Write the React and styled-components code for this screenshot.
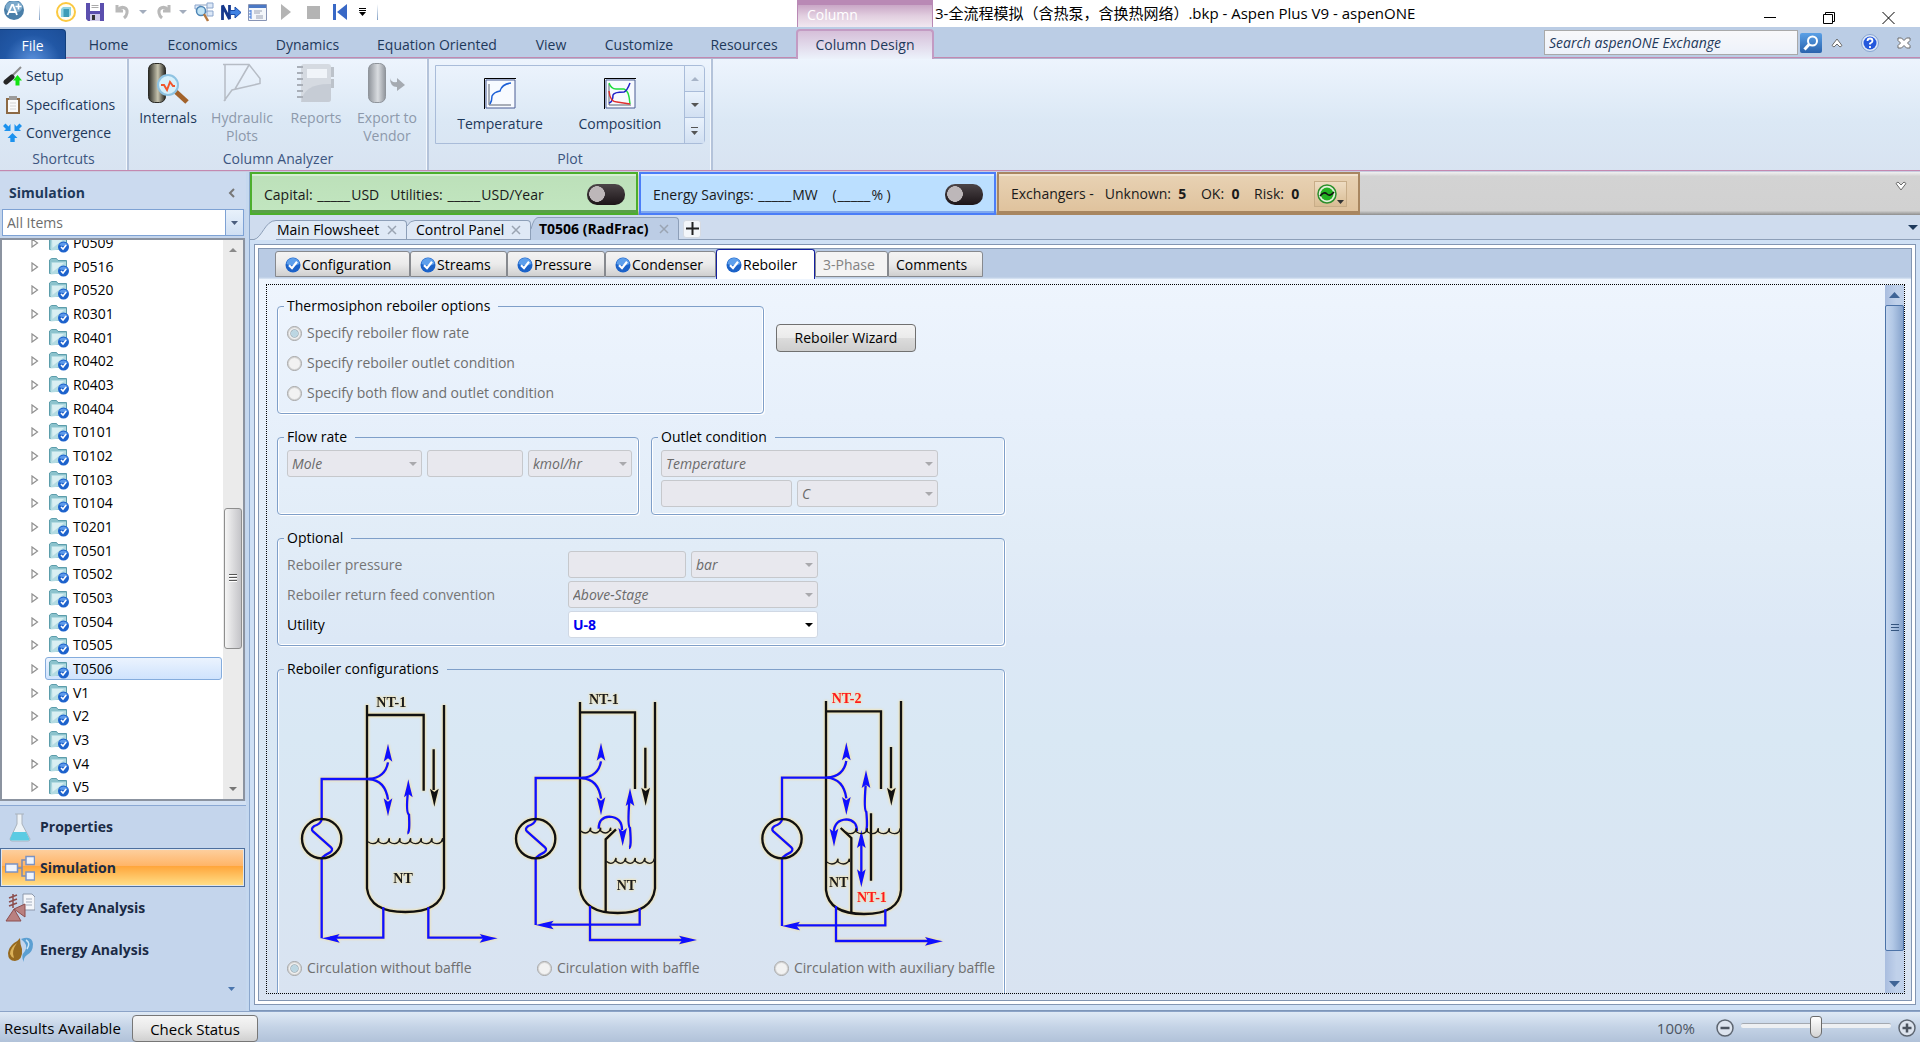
import React from "react";
import styled, { createGlobalStyle } from "styled-components";

let GlobalStyle = createGlobalStyle`
  *, *::before, *::after {
    box-sizing: border-box;
  }

  body {
    margin: 0;
    overflow: hidden;
    background: #fff;
    font-family: "Open Sans", "Noto Sans", "Noto Sans CJK SC", sans-serif;
    font-size: 14px;
    line-height: 18px;
    color: #000;
  }

  button, input, select {
    font: inherit;
    color: inherit;
  }

  button {
    padding: 0;
    border: 0;
    background: none;
    white-space: nowrap;
  }

  svg {
    display: block;
    flex: none;
  }
`;

let Window = styled.div`
  display: flex;
  flex-direction: column;
  height: 100vh;
  background: #c5d8ef;
`;

/* Title bar */

let TitleBar = styled.header`
  display: flex;
  flex: none;
  height: 27px;
  background: #fff;
`;

let QuickAccess = styled.div`
  display: flex;
  align-items: center;
  width: 797px;
  height: 24px;
`;

let QuickButton = styled.button`
  display: flex;
  justify-content: center;
  align-items: center;
  width: ${p => p.$w}px;
  height: 24px;
`;

let QuickLine = styled.span`
  width: 1px;
  height: 16px;
  background: linear-gradient(#fff, #7f9ec4);
`;

let ContextTitle = styled.div`
  width: 136px;
  padding: 1px 9px;
  border: 1px solid #b989b5;
  border-top-width: 5px;
  border-bottom: 0;
  background: linear-gradient(#c9a6c6, #e2cfe0 50%, #f1e8f0);
  color: #fff;
`;

let WindowTitle = styled.h1`
  flex: 1;
  margin: 0;
  padding: 4px 2px;
  font-size: 15px;
  font-weight: 400;
`;

let WindowButtons = styled.div`
  display: flex;
  padding: 8px 2px 0 0;
`;

let WindowButton = styled.button`
  display: flex;
  justify-content: center;
  width: 58px;
  margin-right: 1px;
`;

/* Ribbon */

let RibbonTabs = styled.nav`
  display: flex;
  flex: none;
  height: 32px;
  padding-top: 2px;
  background: #bbcde5;
  box-shadow: inset 0 -1px 0 #b0b4cf, inset 0 -2px 0 #c389b0;
`;

let RibbonTab = styled.button`
  width: ${p => p.$w}px;
  height: 30px;
  padding-top: 2px;
  color: #1e395b;
`;

let FileTab = styled(RibbonTab)`
  border: 1px solid #123f7c;
  border-width: 1px 1px 0 0;
  border-radius: 0 4px 0 0;
  background: radial-gradient(ellipse at 50% 110%, #5c92dd, #2157a5 60%, #1c4e98);
  color: #fff;
`;

let ActiveRibbonTab = styled(RibbonTab)`
  padding-top: 0;
  border: 2px solid #c39bc3;
  border-bottom: 0;
  border-radius: 4px 4px 0 0;
  background: linear-gradient(#d6bfd9, #ecf2fb);
`;

let RibbonTools = styled.div`
  display: flex;
  align-items: center;
  height: 27px;
  margin-left: auto;
`;

let SearchBox = styled.input`
  width: 254px;
  height: 25px;
  padding: 0 4px;
  border: 1px solid #a9a9a9;
  background: linear-gradient(#f8f8fa, #edf2fa);
  font-style: italic;
  color: #1e395b;

  &::placeholder {
    color: #1e395b;
    opacity: 1;
  }
`;

let SearchButton = styled.button`
  display: flex;
  justify-content: center;
  align-items: center;
  width: 22px;
  height: 20px;
  margin-left: 2px;
  border-radius: 2px;
  background: linear-gradient(#5aa0e6, #2a63ad);
`;

let ToolButton = styled.button`
  display: flex;
  justify-content: center;
  width: ${p => p.$w}px;
`;

let Ribbon = styled.section`
  display: flex;
  flex: none;
  height: 113px;
  background: linear-gradient(#edf4fd, #dbe8f5 55%, #d8e3f1);
  box-shadow: inset 0 -1px 0 #c9cbe0, inset 0 -2px 0 #c389b0;
`;

let RibbonGroup = styled.div`
  display: flex;
  flex-direction: column;
  width: ${p => p.$w}px;
  height: 111px;
  border-right: 2px solid #b4c3da;
  box-shadow: inset -1px 0 0 #f4f8fd;
  color: #1e395b;
`;

let GroupBody = styled.div`
  display: flex;
  flex: 1;
  padding: ${p => p.$pad};
`;

let GroupName = styled.div`
  height: 20px;
  text-align: center;
  color: #3c5580;
`;

let ShortcutList = styled.div`
  display: flex;
  flex-direction: column;
  justify-content: space-between;
  height: 83px;
`;

let Shortcut = styled.button`
  display: flex;
  align-items: center;
  gap: 4px;
  height: 26px;
`;

let BigButton = styled.button`
  display: flex;
  flex-direction: column;
  align-items: center;
  gap: 5px;
  width: ${p => p.$w || 74}px;
  white-space: normal;
  color: ${p => (p.disabled ? "#8d99ab" : "#1e395b")};
`;

let Gallery = styled.div`
  display: flex;
  width: 270px;
  height: 79px;
  padding-left: 4px;
  border: 1px solid #a9bcd9;
  border-radius: 0 4px 4px 0;
`;

let GalleryItem = styled.button`
  display: flex;
  flex-direction: column;
  align-items: center;
  gap: 5px;
  width: 120px;
  padding-top: 12px;
  color: #1e395b;
`;

let GalleryScroll = styled.div`
  display: flex;
  flex-direction: column;
  width: 20px;
  margin-left: auto;
  border-left: 1px solid #a9bcd9;
`;

let GalleryArrow = styled.button`
  display: flex;
  flex: 1;
  justify-content: center;
  align-items: center;
  background: linear-gradient(#e9f2fc, #d2e0f2);
  opacity: ${p => (p.disabled ? 0.4 : 1)};

  & + & {
    border-top: 1px solid #a9bcd9;
  }
`;

/* Left side */

let Body = styled.div`
  display: flex;
  flex: 1;
  min-height: 0;
`;

let Side = styled.aside`
  display: flex;
  flex-direction: column;
  width: 246px;
  background: #c4d5ec;
`;

let SideHeader = styled.div`
  display: flex;
  flex: none;
  justify-content: space-between;
  align-items: center;
  height: 37px;
  padding: 4px 11px 0 9px;
  background: #cbdaef;
`;

let SideTitle = styled.h2`
  margin: 0;
  font-size: 14px;
  font-weight: 700;
  color: #1e395b;
`;

let Filter = styled.label`
  display: grid;
  flex: none;
  grid-template-columns: 1fr 18px;
  height: 27px;
  margin: 0 2px 2px;
  border: 1px solid #7ea2d4;
  background: #fff;
`;

let FilterSelect = styled.select`
  grid-area: 1 / 1 / 2 / 3;
  padding: 0 4px;
  border: 0;
  appearance: none;
  background: transparent;
  color: #6d6d6d;
`;

let FilterArrow = styled.span`
  display: flex;
  grid-area: 1 / 2;
  justify-content: center;
  align-items: center;
  border-left: 1px solid #7ea2d4;
  background: linear-gradient(#e8f1fb, #cfdff3);
  pointer-events: none;
`;

let Tree = styled.div`
  display: flex;
  flex: 1;
  min-height: 0;
  margin-right: 1px;
  border: 2px solid #8b93a0;
  background: #fff;
  overflow: hidden;
`;

let TreeList = styled.ul`
  display: flex;
  flex: 1;
  flex-direction: column;
  margin: -9px 0 0;
  padding: 0 1px 0 28px;
  list-style: none;
`;

let TreeItem = styled.li`
  display: flex;
  flex: 1;
  align-items: center;
  gap: 5px;
  min-height: 0;
`;

let TreeButton = styled.button`
  display: flex;
  flex: 1;
  align-items: center;
  gap: 4px;
  height: 23px;
  padding: 0 3px;
  border: 1px solid ${p => (p.$selected ? "#84acdd" : "transparent")};
  border-radius: 3px;
  background: ${p => (p.$selected ? "linear-gradient(#ebf3fe, #cfe3fd)" : "none")};
`;

let TreeScroll = styled.div`
  display: flex;
  flex-direction: column;
  align-items: center;
  width: 20px;
  padding: 8px 0;
  background: #ebebeb;
`;

let TreeThumb = styled.div`
  display: flex;
  justify-content: center;
  align-items: center;
  width: 18px;
  height: 26%;
  margin: auto 0 ${p => p.$bottom}px;
  border: 1px solid #8e8e8e;
  border-radius: 3px;
  background: linear-gradient(90deg, #f5f5f5, #dcdcde 50%, #c4c4c8);
`;

let Splitter = styled.div`
  flex: none;
  height: 5px;
  border-bottom: 1px solid #8aa8d3;
  background: #d3e1f3;
`;

let Areas = styled.nav`
  display: flex;
  flex: none;
  flex-direction: column;
  height: 205px;
`;

let Area = styled.button`
  display: flex;
  align-items: center;
  gap: 5px;
  height: ${p => (p.$active ? 39 : 42)}px;
  padding-left: 4px;
  margin-right: 1px;
  border: 1px solid ${p => (p.$active ? "#4d6f9e" : "transparent")};
  background: ${p =>
    p.$active ? "linear-gradient(#fdd0a0, #ffb568 45%, #ffa53a 46%, #ffe08a)" : "none"};
  box-shadow: ${p => (p.$active ? "inset 0 0 0 1px #dfe6ee" : "none")};
  font-weight: 700;
  color: #1b2b45;
`;

let AreasMore = styled.div`
  display: flex;
  justify-content: flex-end;
  padding: 16px 11px 0 0;
`;

/* Activated analysis strip */

let Main = styled.main`
  display: flex;
  flex: 1;
  flex-direction: column;
  min-width: 0;
  margin-left: 4px;
  box-shadow: -1px 0 0 #8ba7cd;
`;

let AnalysisStrip = styled.section`
  display: flex;
  flex: none;
  gap: 1px;
  height: 43px;
  background: linear-gradient(#f0f0f0, #d3d3d3 10%, #d1d1d1 90%, #8e8e8e);
`;

let colors = {
  green: "border-color: #4cae2c; background: linear-gradient(#bce0b9, #c2e6c0); box-shadow: inset 0 2px 0 #d7efd4, inset 0 -3px 0 #58a047;",
  blue: "border-color: #4a7df8; background: #bbdfff; box-shadow: inset 0 2px 0 #dceeff, inset 0 -2px 0 #7fa8ee;",
  brown: "border-color: #a88660; background: linear-gradient(#e8d2b4, #dfc29c); box-shadow: inset 0 2px 0 #f1e2cc, inset 0 -2px 0 #a88660;",
};

let Analysis = styled.div`
  display: flex;
  align-items: center;
  gap: 11px;
  width: ${p => p.$w}px;
  height: 43px;
  padding: 1px 11px 0 12px;
  border: 2px solid;
  white-space: pre;
  color: #1a1a1a;
  ${p => colors[p.$tone]}
`;

let Blank = styled.span`
  margin: 0 1px;
  font-size: 15px;
`;

let Toggle = styled.input`
  appearance: none;
  width: 38px;
  height: 21px;
  margin: 0 0 0 auto;
  border-radius: 10px;
  background: radial-gradient(ellipse 8px 8px at 10px 10px, #bdb7b9 95%, transparent),
    linear-gradient(#4c4548, #1c1518);
`;

let ExchangerButton = styled.button`
  display: flex;
  align-items: flex-end;
  width: 33px;
  height: 26px;
  margin-left: auto;
  padding: 2px;
  border: 1px solid #c8ad88;
  background: linear-gradient(#eedcc2, #d9bc94);
`;

let StripToggle = styled.button`
  align-self: flex-start;
  margin: 9px 13px 0 auto;
`;

/* Document tabs */

let DocTabs = styled.nav`
  display: flex;
  flex: none;
  align-items: flex-end;
  height: 25px;
  background: #cfdcee;
  box-shadow: inset 0 -1px 0 #8d9fb8;
`;

let DocTab = styled.div`
  display: flex;
  height: ${p => (p.$active ? 23 : 20)}px;
  margin-left: ${p => (p.$first ? 4 : 0)}px;
`;

let DocTabBody = styled.div`
  display: flex;
  justify-content: space-between;
  align-items: center;
  width: ${p => p.$w}px;
  padding: 0 9px 0 1px;
  border: 1px solid #8d9fb8;
  border-width: 1px 1px ${p => (p.$active ? 0 : 1)}px 0;
  border-radius: 0 4px 0 0;
  background: ${p => (p.$active ? "#bccde5" : "#dfe9f6")};
  font-weight: ${p => (p.$active ? 700 : 400)};
`;

let AddTab = styled.button`
  display: flex;
  justify-content: center;
  align-items: center;
  align-self: center;
  width: 18px;
  height: 18px;
  margin: 2px 0 0 4px;
  border: 1px solid #d5dae2;
  border-radius: 3px;
  background: #f3f6fa;
`;

let DocMenu = styled.button`
  align-self: center;
  margin: 0 2px 0 auto;
`;

/* Form */

let DocFrame = styled.div`
  display: flex;
  flex: 1;
  min-height: 0;
  padding: 4px 4px 5px;
  background: #cfe0f5;
  border-bottom: 1px solid #7d95b8;
`;

let DocInner = styled.div`
  display: flex;
  flex: 1;
  min-width: 0;
  padding: 3px;
  border: 1px solid #8396b3;
  background: #fff;
`;

let FormSheet = styled.div`
  display: flex;
  flex: 1;
  flex-direction: column;
  min-width: 0;
  border: 1px solid #8396b3;
  background: linear-gradient(#f0f6fe, #e7f0fb 22%, #e1ecf7 40%, #dce8f6 52%, #d9e8f4 65%, #d9e3f1);
`;

let SheetTabs = styled.div`
  display: flex;
  flex: none;
  align-items: flex-end;
  height: 30px;
  padding-left: 16px;
  background: linear-gradient(#b9cbe4 28px, #dbe7f5);
`;

let SheetTab = styled.button`
  display: flex;
  align-items: center;
  gap: 1px;
  width: ${p => p.$w}px;
  height: ${p => (p["aria-selected"] ? 30 : 26)}px;
  margin-bottom: ${p => (p["aria-selected"] ? 0 : 2)}px;
  padding: 1px 0 0 ${p => (p.$done ? 9 : 7)}px;
  border: 1px solid ${p => (p["aria-selected"] ? "#1420a0" : "#86898e")};
  border-bottom-width: ${p => (p["aria-selected"] ? 0 : 1)}px;
  border-radius: 3px 3px 0 0;
  background: ${p =>
    p["aria-selected"] ? "#fff" : p.disabled ? "#f4f4f4" : "linear-gradient(#f3f3f3, #ebebeb 50%, #cfcfcf)"};
  color: ${p => (p.disabled ? "#838383" : "#000")};
`;

let ScrollArea = styled.div`
  display: flex;
  flex: 1;
  min-height: 0;
  margin: 5px 6px 6px 7px;
  border: 1px dotted #000;
  overflow: hidden;
`;

let Form = styled.form`
  display: flex;
  flex: 1;
  flex-direction: column;
  align-items: flex-start;
  min-width: 0;
  padding: 12px 0 0 10px;
  gap: 14px;
  overflow: hidden;
`;

let FormRow = styled.div`
  display: flex;
  flex: none;
  gap: 12px;
`;

let Group = styled.fieldset`
  flex: none;
  width: ${p => p.$w}px;
  min-width: 0;
  height: ${p => (p.$h ? p.$h + "px" : "auto")};
  margin: 0;
  padding: 4px 0 0 9px;
  border: 1px solid #7f9fc9;
  border-radius: 4px;
  box-shadow: 1px 1px 0 #fff, inset 1px 0 0 #fff, inset -1px -1px 0 #fff;
`;

let Legend = styled.legend`
  height: 18px;
  margin-left: -3px;
  padding: 0 8px 0 3px;
`;

let Radios = styled.div`
  display: flex;
  flex-direction: column;
  gap: 12px;
  padding-top: 5px;
`;

let RadioLabel = styled.label`
  display: flex;
  align-items: center;
  gap: 5px;
  height: 18px;
  white-space: nowrap;
  color: #6f6f6f;
`;

let RadioInput = styled.input`
  appearance: none;
  flex: none;
  width: 15px;
  height: 15px;
  margin: 0;
  border: 1px solid #a4a4a4;
  border-radius: 50%;
  background: #f2f2f2;
  box-shadow: inset 0 0 0 1px #d4d4d4;

  &:checked {
    background: radial-gradient(circle closest-side, #bcd6e2 50%, #a3b0b8 58%, #f2f2f2 72%);
  }
`;

let WizardButton = styled.button`
  width: 140px;
  height: 28px;
  margin-top: 27px;
  border: 1px solid #707070;
  border-radius: 4px;
  background: linear-gradient(#f3f3f3, #ebebeb 49%, #dcdcdc 50%, #cecece);
`;

let Fields = styled.div`
  display: flex;
  gap: 5px;
  margin-bottom: 3px;
`;

let FieldRow = styled.div`
  display: grid;
  grid-template-columns: 281px auto;
  align-items: center;
  width: 531px;
  margin-bottom: 3px;
  color: ${p => (p.$enabled ? "#000" : "#757575")};
`;

let FieldGroup = styled.div`
  display: flex;
  gap: 5px;
`;

let TextField = styled.input`
  width: ${p => p.$w}px;
  height: 27px;
  border: 1px solid #c6c8cc;
  border-radius: 3px;
  background: #e8e8ee;
`;

let ComboWrap = styled.div`
  display: grid;
  grid-template-columns: 1fr 19px;
  align-items: center;
  width: ${p => p.$w}px;
`;

let ComboSelect = styled.select`
  grid-area: 1 / 1 / 2 / 3;
  height: 27px;
  padding: 1px 4px 0;
  border: 1px solid ${p => (p.disabled ? "#c6c8cc" : "#d0d8e4")};
  border-radius: 3px;
  appearance: none;
  background: ${p => (p.disabled ? "#e8e8ee" : "#fff")};
  font-style: ${p => (p.disabled ? "italic" : "normal")};
  font-weight: ${p => (p.disabled ? 400 : 700)};
  color: ${p => (p.disabled ? "#6b6b6b" : "#0000f0")};
  opacity: 1;
`;

let ComboArrow = styled.span`
  grid-area: 1 / 2;
  justify-self: center;
  pointer-events: none;
`;

let Diagrams = styled.div`
  display: flex;
  padding: 8px 0 0 12px;
`;

let ConfigChoices = styled.div`
  display: grid;
  grid-template-columns: 250px 237px auto;
  padding-top: 11px;
`;

let ConfigNote = styled.div`
  padding: 13px 0 0 20px;
  color: #6f6f6f;
`;

let FormScroll = styled.div`
  display: flex;
  flex-direction: column;
  align-items: center;
  width: 19px;
  padding-bottom: 6px;
  background: linear-gradient(90deg, #a9bddf, #c0d1ea 60%);
`;

let FormScrollUp = styled.div`
  display: flex;
  justify-content: center;
  align-items: center;
  height: 20px;
`;

let FormThumb = styled.div`
  display: flex;
  flex: 1;
  justify-content: center;
  align-items: center;
  width: 19px;
  margin-bottom: 30px;
  border: 1px solid #4c73a8;
  border-radius: 2px;
  background: linear-gradient(90deg, #c5d6ee, #b2c8e6 40%, #86a3cc);
`;

/* Status bar */

let StatusBar = styled.footer`
  display: flex;
  flex: none;
  align-items: center;
  height: 31px;
  padding: 2px 0 0 4px;
  border-top: 1px solid #8ba3c7;
  background: linear-gradient(#dfe9f5, #c4d3e6 50%, #b1c2d9);
  font-size: 15px;
`;

let StatusButton = styled.button`
  align-self: flex-end;
  width: 126px;
  height: 27px;
  margin-left: 6px;
  border: 1px solid #777;
  border-radius: 4px;
  background: linear-gradient(#f6f6f6, #e8e8e8 50%, #d0d0d0);
`;

let StatusText = styled.span`
  width: 122px;
  white-space: nowrap;
`;

let Zoom = styled.div`
  display: flex;
  align-items: center;
  gap: 7px;
  margin-left: auto;
  padding-right: 4px;
  color: #4d5663;
`;

let ZoomLevel = styled.output`
  margin-right: 14px;
`;

let Slider = styled.input`
  appearance: none;
  width: 150px;
  height: 22px;
  margin: 0 0 6px;
  background: transparent;

  &::-webkit-slider-runnable-track {
    height: 5px;
    border-top: 1px solid #a4a9b1;
    border-radius: 2px;
    background: #eef0f3;
  }

  &::-webkit-slider-thumb {
    appearance: none;
    width: 12px;
    height: 22px;
    margin-top: -8px;
    border: 1px solid #6b6b6b;
    border-radius: 3px 3px 6px 6px;
    background: linear-gradient(#fff, #d4d4d4);
  }
`;

/* Icons */

function Caret({ w = 8, color = "#4a5d7d", up }) {
  let h = Math.ceil(w / 2);
  return (
    <svg width={w} height={h} viewBox="0 0 8 4" preserveAspectRatio="none">
      <path d={up ? "M0 4L4 0l4 4z" : "M0 0h8L4 4z"} fill={color} />
    </svg>
  );
}

function CheckBall() {
  return (
    <svg width="16" height="16" viewBox="0 0 16 16">
      <circle cx="8" cy="8" r="7.5" fill="#1b62c8" />
      <path d="M1.5 7A6.5 6 0 0 1 14.5 7Q8 10 1.5 7z" fill="#5d9fec" />
      <path d="M4 8.2l3 3 5-6.4" fill="none" stroke="#fff" strokeWidth="2.2" />
    </svg>
  );
}

function FolderIcon() {
  return (
    <svg width="20" height="20" viewBox="0 0 20 20">
      <path d="M.5 3L2.5 1.5h5l1.5 2h8.500v13H.5z" fill="#8cc3cd" stroke="#5c9dab" />
      <path d="M2.500 5H17v11L1.500 17.5z" fill="#b3dbe2" />
      <path d="M3 6h12L3.500 15z" fill="#d9eff2" />
      <circle cx="14.5" cy="14" r="5.5" fill="#1d62cc" />
      <path d="M10 12a5 4.500 0 0 1 9 0q-4.500 2-9 0z" fill="#5c99ea" />
      <path d="M12 14l2 2 3.200-4" fill="none" stroke="#fff" strokeWidth="1.600" />
    </svg>
  );
}

function Expander() {
  return (
    <svg width="10" height="10" viewBox="0 0 10 10">
      <path d="M2 1l5.500 4L2 9z" fill="#fff" stroke="#8f8f8f" strokeWidth="1.200" />
    </svg>
  );
}

function Cross({ color = "#9aa4b2" }) {
  return (
    <svg width="10" height="10" viewBox="0 0 10 10">
      <path d="M1 1l8 8M9 1L1 9" stroke={color} strokeWidth="1.500" />
    </svg>
  );
}

function Grip({ vertical, color }) {
  return (
    <svg width="10" height="10" viewBox="0 0 10 10">
      <path d="M1 1.500h8M1 4.500h8M1 7.500h8" stroke={color || "#555"} strokeWidth="1" />
      {vertical && <path d="M1 2.500h8M1 5.500h8M1 8.500h8" stroke="#fff" strokeWidth="1" />}
    </svg>
  );
}

function LogoIcon() {
  return (
    <svg width="22" height="22" viewBox="0 0 22 22">
      <circle cx="11" cy="9" r="10" fill="#4a7fa9" />
      <ellipse cx="11" cy="6" rx="8.500" ry="6" fill="#7ba9cb" />
      <path d="M4.500 14L9 4h1l4 10M6 11h6.500" fill="none" stroke="#fff" strokeWidth="1.800" />
      <path d="M12.500 5.500h6M15.500 2.500v6" stroke="#fff" strokeWidth="1.600" />
    </svg>
  );
}

function NewIcon() {
  return (
    <svg width="20" height="20" viewBox="0 0 20 20">
      <circle cx="10" cy="10" r="9" fill="#fffdf2" stroke="#fbc941" strokeWidth="2" />
      <path d="M5 7l2-2h8v8l-2 2H5z" fill="#8ed2e2" />
      <path d="M7.500 7H13v8H7.500z" fill="#3d9cb8" />
    </svg>
  );
}

function SaveIcon() {
  return (
    <svg width="18" height="18" viewBox="0 0 18 18">
      <path d="M0 0h18v18H2l-2-2z" fill="#5b4fae" />
      <path d="M4 0h10v8H4z" fill="#fff" />
      <path d="M5.500 2.500h7M5.500 4.500h7" stroke="#aaa" />
      <path d="M4 11h10v7H4z" fill="#cfcbe9" />
      <path d="M6 12h3v5H6z" fill="#333" />
    </svg>
  );
}

function UndoIcon({ flip }) {
  return (
    <svg width="15" height="16" viewBox="0 0 15 16">
      <path
        d={flip ? "M13 1v6H7M12 6C8 1 2 4 3 9q.5 3 3 5" : "M2 1v6h6M3 6c4-5 10-2 9 3q-.5 3-3 5"}
        fill="none"
        stroke="#b9b9b9"
        strokeWidth="3"
      />
    </svg>
  );
}

function FindIcon() {
  return (
    <svg width="20" height="20" viewBox="0 0 20 20">
      <path d="M6 3h8M13 5v6h3" fill="none" stroke="#8da2bf" />
      <path d="M1 3h5v4H1zM13 1h6v5h-6zM13 9h6v5h-6z" fill="#dce8f7" stroke="#8ba5cc" />
      <circle cx="7" cy="9" r="4.500" fill="#c2e4f5" stroke="#4f86b6" strokeWidth="1.500" />
      <path d="M10 12l4 7" stroke="#b57840" strokeWidth="2.500" />
    </svg>
  );
}

function NextIcon() {
  return (
    <svg width="20" height="17" viewBox="0 0 20 17">
      <path d="M1.500 16V1.500L8.500 15V1" fill="none" stroke="#16388c" strokeWidth="2.800" />
      <path d="M9 6.500h5V3l6 5.500-6 5.500v-3.500H9z" fill="#3f82e3" stroke="#1c4eaa" />
    </svg>
  );
}

function SheetIcon() {
  return (
    <svg width="19" height="17" viewBox="0 0 19 17">
      <path d="M.5.5h18v16H.5z" fill="#f4f7fb" stroke="#8794b5" />
      <path d="M1 1h17v3H1z" fill="#4b78c4" />
      <path d="M3 6v9M1 7h2M1 10h2M1 13h2" stroke="#3c78dc" />
      <path d="M6 7h8M6 9h6M8 12h7M8 14h7" stroke="#9aa2b4" />
    </svg>
  );
}

function SetupIcon() {
  return (
    <svg width="19" height="20" viewBox="0 0 19 20">
      <path d="M10 9l8-8" stroke="#8d8d8d" strokeWidth="2" />
      <path d="M3 16l6-5" stroke="#262626" strokeWidth="5" strokeLinecap="round" />
      <path d="M14.500 9l4.500 5.500h-2.500v5h-4v-5H10z" fill="#12e312" />
    </svg>
  );
}

function ClipboardIcon() {
  return (
    <svg width="19" height="20" viewBox="0 0 19 20">
      <path d="M3 3h14v16H3z" fill="#8d6a45" />
      <path d="M5 5h10v12H5z" fill="#fafafa" />
      <path d="M6 1h8v4H6z" fill="#9b9b9b" />
      <path d="M7 8h6M7 11h6M7 14h6" stroke="#d4d4d4" />
    </svg>
  );
}

function ConvergeIcon() {
  return (
    <svg width="19" height="20" viewBox="0 0 19 20">
      <g fill="#1c92ee">
        <path d="M9.500 10l5 5h-2.800v4H7.300v-4H4.500z" />
        <path d="M0 3l2.500-2.500 3 3L7.500 1v7H1l2-2z" />
        <path d="M19 3L16.500.5l-3 3L11.500 1v7H18l-2-2z" />
      </g>
    </svg>
  );
}

function VesselShape({ from, mid, to }) {
  return (
    <>
      <defs>
        <linearGradient id={"v" + from.slice(1)}>
          <stop offset="0" stopColor={from} />
          <stop offset=".55" stopColor={mid} />
          <stop offset="1" stopColor={to} />
        </linearGradient>
      </defs>
      <rect x=".5" y=".5" width="17" height="39" rx="6" fill={`url(#v${from.slice(1)})`} stroke={from} />
    </>
  );
}

function InternalsIcon() {
  return (
    <svg width="41" height="41" viewBox="0 0 41 41">
      <VesselShape from="#2b2b26" mid="#c6c3ae" to="#23231f" />
      <path d="M27 28l12 11" stroke="#a2622b" strokeWidth="5" />
      <circle cx="20" cy="22" r="10" fill="#d6f0fb" stroke="#8fc3e2" strokeWidth="2" />
      <path d="M13 22h3l3 5 3-8 3 4h2" fill="none" stroke="#f2562c" strokeWidth="2" />
    </svg>
  );
}

function HydraulicIcon() {
  return (
    <svg width="38" height="41" viewBox="0 0 38 41">
      <path d="M0 1.500h26l11 14v5L9 27 1 38M2 1v37M26 2L12 26" fill="none" stroke="#b6bcc5" strokeWidth="1.500" />
    </svg>
  );
}

function ReportsIcon() {
  return (
    <svg width="38" height="41" viewBox="0 0 38 41">
      <path d="M33 4h4v10h-4zM33 16h4v9h-4z" fill="#bcc2ca" />
      <rect x="4" y="1" width="30" height="38" rx="3" fill="#d5dae1" />
      <rect x="10" y="6" width="20" height="9" fill="#f0f4f9" />
      <path d="M4 39q3-19 30-18v15q0 3-3 3z" fill="#c6ccd5" />
      <path d="M0 4h6M0 10h6M0 16h6M0 22h6M0 28h6M0 34h6" stroke="#a9afb8" strokeWidth="2" />
    </svg>
  );
}

function ExportIcon() {
  return (
    <svg width="38" height="41" viewBox="0 0 38 41">
      <VesselShape from="#8f949b" mid="#d9dce0" to="#90959c" />
      <path d="M22 15q1 5 7 4v-4l8 7-8 6v-4q-7 0-7-9z" fill="#a5aab1" />
    </svg>
  );
}

function PlotIcon({ multi }) {
  return (
    <svg width="32" height="32" viewBox="0 0 32 32">
      <path d="M2 2h29v28H2z" fill="#f7faff" stroke="#4b5c93" />
      <path d="M.5 31V.5H32" fill="none" stroke="#000" />
      <path d="M5 6v21h22" fill="none" stroke="#5a6270" />
      {multi ? (
        <g fill="none" strokeWidth="1.500">
          <path d="M5 5q2 6 7 6h8q5 1 6 15" stroke="#1fdc3c" />
          <path d="M5 25q4-1 4-8 1-3 11-3 3-1 6-9" stroke="#2020c8" />
          <path d="M5 13q1 11 8 11l13 2" stroke="#e03030" />
        </g>
      ) : (
        <path d="M6 26q2-3 2-8 2-4 8-5 2-7 11-8" fill="none" stroke="#1c5fd6" strokeWidth="1.500" />
      )}
    </svg>
  );
}

function FlaskIcon() {
  return (
    <svg width="30" height="30" viewBox="0 0 30 30">
      <path d="M10 2h9M12 2v10L5 27q0 2 2 2h16q2 0 2-2l-8-15V2" fill="#eef3f7" stroke="#a9b2bc" />
      <path d="M8 20h13l3.500 7q0 1.500-2 1.500H7q-2 0-2-1.500z" fill="#5bcbe3" />
    </svg>
  );
}

function FlowIcon() {
  return (
    <svg width="30" height="30" viewBox="0 0 30 30">
      <path d="M12 15h5M22 7h-5v16h5" fill="none" stroke="#7b8bb3" strokeWidth="1.500" />
      <path d="M.5 11h12v8H.5zM21 3.500h8.500v8H21zM21 19h8.500v8H21z" fill="#f0f4fc" stroke="#7b93c4" strokeWidth="1.500" />
    </svg>
  );
}

function SafetyIcon() {
  return (
    <svg width="30" height="30" viewBox="0 0 30 30">
      <path d="M18 1h9l3 3v13H18z" fill="#f4f6fa" stroke="#8d98ab" />
      <path d="M21 6h6M21 9h6M21 12h6" stroke="#a2acbc" />
      <path d="M1 28L9 16l7 12zM9 16l11-5v13z" fill="#b98080" stroke="#8c4e4e" />
      <path d="M8 1v14M4 5l8-3M4 9l8-3M4 13l8-3" fill="none" stroke="#8c4e4e" strokeWidth="1.500" />
    </svg>
  );
}

function EnergyIcon() {
  return (
    <svg width="30" height="30" viewBox="0 0 30 30">
      <path d="M15 3q0 6 2 11 1 11-7 12-7 0-7-8 1-6 6-10 4-2 6-5z" fill="#96691f" />
      <path d="M12 8q-7 5-7 11 1 3 4 4-3-7 3-15z" fill="#dcb25a" />
      <path d="M16 4q11-4 12 5 0 8-6 11-4 3-3 7-4-6 1-11 4-6-4-12z" fill="#5b9fd2" />
      <path d="M21 5q5 3 1 9" fill="none" stroke="#cfe8f8" strokeWidth="1.500" />
    </svg>
  );
}

function ZoomRound({ plus }) {
  return (
    <svg width="18" height="18" viewBox="0 0 18 18">
      <circle cx="9" cy="9" r="8" fill="#dde4ee" stroke="#5d6570" strokeWidth="1.500" />
      <path d={plus ? "M4.500 9h9M9 4.500v9" : "M4.500 9h9"} stroke="#4d5560" strokeWidth="2.500" />
    </svg>
  );
}

/* Reboiler diagrams, drawn three units to the pixel */

let Diagram = styled.svg`
  fill: none;
  stroke-width: 7;
  filter: drop-shadow(0 0 1px #f1e2ae) drop-shadow(0 0 1px #f1e2ae);

  text {
    font-family: "Liberation Serif", serif;
    font-size: 42px;
    font-weight: 700;
    stroke: none;
    fill: #1a1a1a;
  }

  text.red {
    fill: #ff1a1a;
  }
`;

function Head({ x, y, dir = 0, color = "#1010ff" }) {
  return (
    <path
      d="M0 0L-5 22L-13 54L0 44L13 54L5 22z"
      transform={`translate(${x} ${y}) rotate(${dir})`}
      fill={color}
    />
  );
}

/* n crests, each a shallow dip that ends in a small peak */
function Waves({ x, y, n, w }) {
  let d = `M${x} ${y}`;
  for (let i = 0; i < n; i++) d += `q${w / 2} 12 ${w - 4} 0l4 -10v10`;
  return <path d={d} stroke="#1a1a1a" strokeWidth="4" />;
}

function Exchanger({ x, feedX, feedY, bottomY }) {
  return (
    <>
      <g stroke="#1010ff">
        <path d={`M${x} 510V${feedY}H${feedX + 20}M${x} 622V${bottomY}`} />
        <path d={`M${x} 510q-4 12-22 18q-12 8-4 16L${x + 28} 592q8 8-4 16q-16 8-24 16`} />
        <path d={`M${feedX + 5} ${feedY}q50-4 58-50M${feedX + 5} ${feedY}q50 4 58 62`} />
      </g>
      <circle cx={x} cy="566" r="59" stroke="#111" />
      <Head x={feedX + 63} y={feedY - 106} />
      <Head x={feedX + 63} y={feedY + 112} dir={180} />
    </>
  );
}

function WithoutBaffle() {
  return (
    <Diagram width="214" height="258" viewBox="87 120 642 774">
      <path d="M291 165V715Q300 786 406 786T522 715V165M291 195H461V422M491 298V420" stroke="#111" />
      <Head x={493} y={470} dir={180} color="#111" />
      <Exchanger x={155} feedX={291} feedY={387} bottomY={865} />
      <path d="M340 772V863H180M475 772V863H650M412 550q8 0 5-56q-10-6-3-70" stroke="#1010ff" />
      <Head x={415} y={388} />
      <Head x={155} y={865} dir={270} />
      <Head x={683} y={865} dir={90} />
      <Waves x={294} y={575} n={7} w={32} />
      <text x="319" y="172">NT-1</text>
      <text x="370" y="699">NT</text>
    </Diagram>
  );
}

function WithBaffle() {
  return (
    <Diagram width="247" height="258" viewBox="729 120 741 774">
      <path d="M930 156V715Q940 789 1043 789T1155 715V156M930 187H1095V417M1126 293V415" stroke="#111" />
      <path d="M1038 538L1007 568V788" stroke="#111" />
      <Head x={1127} y={467} dir={180} color="#111" />
      <Exchanger x={797} feedX={930} feedY={384} bottomY={825} />
      <path d="M1109 775V824H820M960 768V870H1240M986 536q0-34 32-36q38 2 38 40M1077 594q8 0 3-60q-8-6-2-80" stroke="#1010ff" />
      <Head x={1058} y={588} dir={180} />
      <Head x={1080} y={414} />
      <Head x={797} y={825} dir={270} />
      <Head x={1281} y={870} dir={90} />
      <Waves x={932} y={543} n={3} w={30} />
      <Waves x={1009} y={634} n={5} w={29} />
      <text x="957" y="163">NT-1</text>
      <text x="1040" y="720">NT</text>
    </Diagram>
  );
}

function WithAuxiliaryBaffle() {
  return (
    <Diagram width="240" height="258" viewBox="300 120 720 774">
      <path d="M498 153V720Q506 792 612 792T723 720V153M498 184H663V417M693 291V415" stroke="#111" />
      <path d="M542 534L574 564V788M633 490V692" stroke="#111" />
      <Head x={694} y={467} dir={180} color="#111" />
      <Exchanger x={366} feedX={496} feedY={383} bottomY={828} />
      <path d="M676 778V826H390M528 768V873H810M591 544q0-34-32-36q-36 2-38 40M616 542q8 0 3-56q-8-6-2-80M604 580V670" stroke="#1010ff" />
      <Head x={522} y={590} dir={180} />
      <Head x={618} y={360} />
      <Head x={604} y={540} />
      <Head x={604} y={712} dir={180} />
      <Head x={366} y={828} dir={270} />
      <Head x={849} y={874} dir={90} />
      <Waves x={500} y={636} n={2} w={34} />
      <Waves x={556} y={545} n={5} w={33} />
      <text x="507" y="712">NT</text>
      <text className="red" x="515" y="160">NT-2</text>
      <text className="red" x="591" y="757">NT-1</text>
    </Diagram>
  );
}

/* Sections */

let ribbonTabs = [
  ["Home", 79],
  ["Economics", 109],
  ["Dynamics", 101],
  ["Equation Oriented", 158],
  ["View", 70],
  ["Customize", 106],
  ["Resources", 104],
];

let blocks =
  "P0509 P0516 P0520 R0301 R0401 R0402 R0403 R0404 T0101 T0102 T0103 T0104 T0201 T0501 T0502 T0503 T0504 T0505 T0506 V1 V2 V3 V4 V5".split(
    " "
  );

let sheets = [
  { name: "Configuration", width: 135, done: true },
  { name: "Streams", width: 97, done: true },
  { name: "Pressure", width: 98, done: true },
  { name: "Condenser", width: 111, done: true },
  { name: "Reboiler", width: 99, done: true, active: true },
  { name: "3-Phase", width: 73, disabled: true },
  { name: "Comments", width: 95 },
];

function Title() {
  return (
    <TitleBar>
      <QuickAccess>
        <QuickButton $w={28} aria-label="Application menu"><LogoIcon /></QuickButton>
        <QuickButton $w={22} aria-label="Separator"><QuickLine /></QuickButton>
        <QuickButton $w={32} aria-label="New"><NewIcon /></QuickButton>
        <QuickButton $w={26} aria-label="Save"><SaveIcon /></QuickButton>
        <QuickButton $w={28} aria-label="Undo"><UndoIcon /></QuickButton>
        <QuickButton $w={14} aria-label="Undo list"><Caret color="#a3adbd" /></QuickButton>
        <QuickButton $w={26} aria-label="Redo"><UndoIcon flip /></QuickButton>
        <QuickButton $w={14} aria-label="Redo list"><Caret color="#a3adbd" /></QuickButton>
        <QuickButton $w={27} aria-label="Find"><FindIcon /></QuickButton>
        <QuickButton $w={27} aria-label="Next"><NextIcon /></QuickButton>
        <QuickButton $w={27} aria-label="Control panel"><SheetIcon /></QuickButton>
        <QuickButton $w={29} aria-label="Run">
          <svg width="10" height="16"><path d="M0 0l10 8-10 8z" fill="#b4b4b4" /></svg>
        </QuickButton>
        <QuickButton $w={27} aria-label="Stop">
          <svg width="13" height="13"><path d="M0 0h13v13H0z" fill="#b4b4b4" /></svg>
        </QuickButton>
        <QuickButton $w={27} aria-label="Reinitialize">
          <svg width="15" height="16"><path d="M0 0h3v16H0zM14 0v16L4 8z" fill="#3868c6" /></svg>
        </QuickButton>
        <QuickButton $w={16} aria-label="Customize toolbar">
          <svg width="7" height="8"><path d="M0 .5h7M0 2.500h7" stroke="#000" /><path d="M0 4h7L3.500 8z" /></svg>
        </QuickButton>
        <QuickButton $w={14} aria-label="Toolbar end"><QuickLine /></QuickButton>
      </QuickAccess>
      <ContextTitle>Column</ContextTitle>
      <WindowTitle>3-全流程模拟（含热泵，含换热网络）.bkp - Aspen Plus V9 - aspenONE</WindowTitle>
      <WindowButtons>
        <WindowButton aria-label="Minimize">
          <svg width="12" height="14"><path d="M0 9.500h12" stroke="#000" /></svg>
        </WindowButton>
        <WindowButton aria-label="Restore">
          <svg width="13" height="16"><path d="M.5 6.500h9v9h-9zM2.500 6V4.500h9v9H10" fill="none" stroke="#000" /></svg>
        </WindowButton>
        <WindowButton aria-label="Close">
          <svg width="13" height="16"><path d="M.5 4l12 12M12.500 4l-12 12" stroke="#000" /></svg>
        </WindowButton>
      </WindowButtons>
    </TitleBar>
  );
}

function TabRow() {
  return (
    <RibbonTabs>
      <FileTab $w={66}>File</FileTab>
      <RibbonTab $w={3} aria-hidden="true" />
      {ribbonTabs.map(([name, width]) => (
        <RibbonTab key={name} $w={width}>{name}</RibbonTab>
      ))}
      <ActiveRibbonTab $w={138}>Column Design</ActiveRibbonTab>
      <RibbonTools>
        <SearchBox aria-label="Search" placeholder="Search aspenONE Exchange" />
        <SearchButton aria-label="Search now">
          <svg width="16" height="16" viewBox="0 0 16 16">
            <circle cx="9.500" cy="6" r="4.500" fill="none" stroke="#fff" strokeWidth="2" />
            <path d="M6 9.500L1.500 14.500" stroke="#fff" strokeWidth="3" />
          </svg>
        </SearchButton>
        <ToolButton $w={30} aria-label="Collapse ribbon">
          <svg width="12" height="10" viewBox="0 0 12 10">
            <path d="M1 7.500L6 1l5 6.500-2 1.500-3-3-3 3z" fill="#fff" stroke="#6c6c6c" />
          </svg>
        </ToolButton>
        <ToolButton $w={36} aria-label="Help">
          <svg width="18" height="18" viewBox="0 0 18 18">
            <circle cx="9" cy="9" r="8.500" fill="#dfe9f7" stroke="#86a3d0" />
            <circle cx="9" cy="9" r="6.500" fill="#2458dc" />
            <path d="M6.500 7q0-2.500 2.500-2.500T11.500 7q0 1.200-2.500 2.500v1M9 12v2" fill="none" stroke="#fff" strokeWidth="1.800" />
          </svg>
        </ToolButton>
        <ToolButton $w={32} aria-label="Close document">
          <svg width="14" height="12" viewBox="0 0 14 12">
            <path d="M1 1h3.500L7 3.500 9.500 1H13v2.500L10.500 6 13 8.500V11H9.500L7 8.500 4.500 11H1V8.500L3.500 6 1 3.500z" fill="#fff" stroke="#6c6c6c" />
          </svg>
        </ToolButton>
      </RibbonTools>
    </RibbonTabs>
  );
}

function RibbonPanel() {
  return (
    <Ribbon>
      <RibbonGroup $w={129}>
        <GroupBody $pad="4px 3px 0">
          <ShortcutList>
            <Shortcut><SetupIcon />Setup</Shortcut>
            <Shortcut><ClipboardIcon />Specifications</Shortcut>
            <Shortcut><ConvergeIcon />Convergence</Shortcut>
          </ShortcutList>
        </GroupBody>
        <GroupName>Shortcuts</GroupName>
      </RibbonGroup>
      <RibbonGroup $w={300}>
        <GroupBody $pad="4px 0 0 2px">
          <BigButton><InternalsIcon />Internals</BigButton>
          <BigButton disabled><HydraulicIcon />Hydraulic Plots</BigButton>
          <BigButton disabled><ReportsIcon />Reports</BigButton>
          <BigButton $w={68} disabled><ExportIcon />Export to Vendor</BigButton>
        </GroupBody>
        <GroupName>Column Analyzer</GroupName>
      </RibbonGroup>
      <RibbonGroup $w={284}>
        <GroupBody $pad="6px 6px 0">
          <Gallery>
            <GalleryItem><PlotIcon />Temperature</GalleryItem>
            <GalleryItem><PlotIcon multi />Composition</GalleryItem>
            <GalleryScroll>
              <GalleryArrow disabled aria-label="Scroll up"><Caret up /></GalleryArrow>
              <GalleryArrow aria-label="Scroll down"><Caret color="#555" /></GalleryArrow>
              <GalleryArrow aria-label="More plots">
                <svg width="7" height="8"><path d="M0 .5h7" stroke="#555" /><path d="M0 4h7L3.500 8z" fill="#555" /></svg>
              </GalleryArrow>
            </GalleryScroll>
          </Gallery>
        </GroupBody>
        <GroupName>Plot</GroupName>
      </RibbonGroup>
    </Ribbon>
  );
}

function SidePanel() {
  return (
    <Side>
      <SideHeader>
        <SideTitle>Simulation</SideTitle>
        <button aria-label="Collapse panel">
          <svg width="7" height="10"><path d="M6 1L2 5l4 4" fill="none" stroke="#777" strokeWidth="2" /></svg>
        </button>
      </SideHeader>
      <Filter>
        <FilterSelect aria-label="Filter items">
          <option>All Items</option>
        </FilterSelect>
        <FilterArrow><Caret w={7} /></FilterArrow>
      </Filter>
      <Tree>
        <TreeList>
          {blocks.map(name => (
            <TreeItem key={name}>
              <Expander />
              <TreeButton $selected={name === "T0506"}><FolderIcon />{name}</TreeButton>
            </TreeItem>
          ))}
        </TreeList>
        <TreeScroll>
          <Caret up color="#8a8a8a" />
          <TreeThumb $bottom={138}><Grip vertical /></TreeThumb>
          <Caret color="#777" />
        </TreeScroll>
      </Tree>
      <Splitter />
      <Areas>
        <Area><FlaskIcon />Properties</Area>
        <Area $active><FlowIcon />Simulation</Area>
        <Area><SafetyIcon />Safety Analysis</Area>
        <Area><EnergyIcon />Energy Analysis</Area>
        <AreasMore><Caret w={7} color="#4a75ad" /></AreasMore>
      </Areas>
    </Side>
  );
}

function AnalysisBar() {
  return (
    <AnalysisStrip>
      <Analysis $w={388} $tone="green">
        <span>Capital: <Blank>_____</Blank>USD</span>
        <span>Utilities: <Blank>_____</Blank>USD/Year</span>
        <Toggle type="checkbox" aria-label="Economic analysis" />
      </Analysis>
      <Analysis $w={357} $tone="blue">
        <span>Energy Savings: <Blank>_____</Blank>MW</span>
        <span> (<Blank>_____</Blank>% )</span>
        <Toggle type="checkbox" aria-label="Energy analysis" />
      </Analysis>
      <Analysis $w={363} $tone="brown">
        <span>Exchangers -</span>
        <span>Unknown:  <b>5</b></span>
        <span> OK:  <b>0</b></span>
        <span> Risk:  <b>0</b></span>
        <ExchangerButton aria-label="Exchanger status">
          <svg width="20" height="20" viewBox="0 0 20 20">
            <circle cx="10" cy="10" r="9" fill="#e4f0dc" stroke="#2c8f2c" strokeWidth="1.500" />
            <circle cx="10" cy="10" r="6.500" fill="#22b022" />
            <path d="M3 12q4-5 7-2t7-2" fill="none" stroke="#111" strokeWidth="1.500" />
          </svg>
          <Caret w={7} color="#333" />
        </ExchangerButton>
      </Analysis>
      <StripToggle aria-label="Collapse analysis bar">
        <svg width="12" height="10" viewBox="0 0 12 10">
          <path d="M1 2.500L3 1l3 3 3-3 2 1.500L6 9z" fill="#fff" stroke="#6c6c6c" />
        </svg>
      </StripToggle>
    </AnalysisStrip>
  );
}

function Documents() {
  return (
    <DocTabs>
      <DocTab $first>
        <svg width="22" height="20"><path d="M0 19.500C8 18 11 .5 22 .5V20H0z" fill="#dfe9f6" /><path d="M0 19.500C8 18 11 .5 22 .5" fill="none" stroke="#8d9fb8" /></svg>
        <DocTabBody $w={131}>Main Flowsheet<Cross /></DocTabBody>
      </DocTab>
      <DocTab>
        <svg width="8" height="20"><path d="M0 6Q3 .5 8 .5V20H0z" fill="#dfe9f6" /><path d="M0 6Q3 .5 8 .5M0 19.500h8" fill="none" stroke="#8d9fb8" /></svg>
        <DocTabBody $w={116}>Control Panel<Cross /></DocTabBody>
      </DocTab>
      <DocTab $active>
        <svg width="7" height="23"><path d="M0 12Q3 .5 7 .5V23H0z" fill="#bccde5" /><path d="M0 12Q3 .5 7 .5" fill="none" stroke="#8d9fb8" /></svg>
        <DocTabBody $w={141} $active>T0506 (RadFrac)<Cross /></DocTabBody>
      </DocTab>
      <AddTab aria-label="New tab">
        <svg width="13" height="13"><path d="M0 6.500h13M6.500 0v13" stroke="#222" strokeWidth="2" /></svg>
      </AddTab>
      <DocMenu aria-label="Open documents"><Caret w={10} color="#1e395b" /></DocMenu>
    </DocTabs>
  );
}

function Radio({ name, label, checked }) {
  return (
    <RadioLabel>
      <RadioInput type="radio" name={name} defaultChecked={checked} disabled />
      {label}
    </RadioLabel>
  );
}

function Combo({ id, label, value, width, enabled }) {
  return (
    <ComboWrap $w={width}>
      <ComboSelect id={id} aria-label={label} disabled={!enabled}>
        <option>{value}</option>
      </ComboSelect>
      <ComboArrow><Caret color={enabled ? "#000" : "#a9a9ad"} /></ComboArrow>
    </ComboWrap>
  );
}

function ReboilerForm() {
  return (
    <Form onSubmit={e => e.preventDefault()}>
      <FormRow>
        <Group $w={487} $h={117}>
          <Legend>Thermosiphon reboiler options</Legend>
          <Radios>
            <Radio name="option" label="Specify reboiler flow rate" checked />
            <Radio name="option" label="Specify reboiler outlet condition" />
            <Radio name="option" label="Specify both flow and outlet condition" />
          </Radios>
        </Group>
        <WizardButton type="button">Reboiler Wizard</WizardButton>
      </FormRow>
      <FormRow>
        <Group $w={362} $h={87}>
          <Legend>Flow rate</Legend>
          <Fields>
            <Combo label="Flow basis" value="Mole" width={135} />
            <TextField $w={96} aria-label="Flow rate value" disabled />
            <Combo label="Flow units" value="kmol/hr" width={104} />
          </Fields>
        </Group>
        <Group $w={354} $h={87}>
          <Legend>Outlet condition</Legend>
          <Fields>
            <Combo label="Outlet condition type" value="Temperature" width={277} />
          </Fields>
          <Fields>
            <TextField $w={131} aria-label="Outlet condition value" disabled />
            <Combo label="Outlet condition units" value="C" width={141} />
          </Fields>
        </Group>
      </FormRow>
      <Group $w={728} $h={117}>
        <Legend>Optional</Legend>
        <FieldRow>
          <label htmlFor="pressure">Reboiler pressure</label>
          <FieldGroup>
            <TextField id="pressure" $w={118} disabled />
            <Combo label="Pressure units" value="bar" width={127} />
          </FieldGroup>
        </FieldRow>
        <FieldRow>
          <label htmlFor="convention">Reboiler return feed convention</label>
          <Combo id="convention" value="Above-Stage" width={250} />
        </FieldRow>
        <FieldRow $enabled>
          <label htmlFor="utility">Utility</label>
          <Combo id="utility" value="U-8" width={250} enabled />
        </FieldRow>
      </Group>
      <Group $w={728}>
        <Legend>Reboiler configurations</Legend>
        <Diagrams>
          <WithoutBaffle />
          <WithBaffle />
          <WithAuxiliaryBaffle />
        </Diagrams>
        <ConfigChoices>
          <Radio name="config" label="Circulation without baffle" checked />
          <div>
            <Radio name="config" label="Circulation with baffle" />
            <ConfigNote>(Normal or auxiliary feed)</ConfigNote>
          </div>
          <Radio name="config" label="Circulation with auxiliary baffle" />
        </ConfigChoices>
      </Group>
    </Form>
  );
}

function App() {
  return (
    <Window>
      <GlobalStyle />
      <Title />
      <TabRow />
      <RibbonPanel />
      <Body>
        <SidePanel />
        <Main>
          <AnalysisBar />
          <Documents />
          <DocFrame>
            <DocInner>
              <FormSheet>
                <SheetTabs role="tablist">
                  {sheets.map(s => (
                    <SheetTab
                      key={s.name}
                      role="tab"
                      $w={s.width}
                      $done={s.done}
                      aria-selected={!!s.active}
                      disabled={s.disabled}
                    >
                      {s.done && <CheckBall />}
                      {s.name}
                    </SheetTab>
                  ))}
                </SheetTabs>
                <ScrollArea>
                  <ReboilerForm />
                  <FormScroll>
                    <FormScrollUp><Caret up w={11} color="#3f6496" /></FormScrollUp>
                    <FormThumb><Grip color="#35557f" /></FormThumb>
                    <Caret w={11} color="#3f6496" />
                  </FormScroll>
                </ScrollArea>
              </FormSheet>
            </DocInner>
          </DocFrame>
        </Main>
      </Body>
      <StatusBar>
        <StatusText>Results Available</StatusText>
        <StatusButton>Check Status</StatusButton>
        <Zoom>
          <ZoomLevel>100%</ZoomLevel>
          <button aria-label="Zoom out"><ZoomRound /></button>
          <Slider type="range" aria-label="Zoom" />
          <button aria-label="Zoom in"><ZoomRound plus /></button>
        </Zoom>
      </StatusBar>
    </Window>
  );
}

export default App;
